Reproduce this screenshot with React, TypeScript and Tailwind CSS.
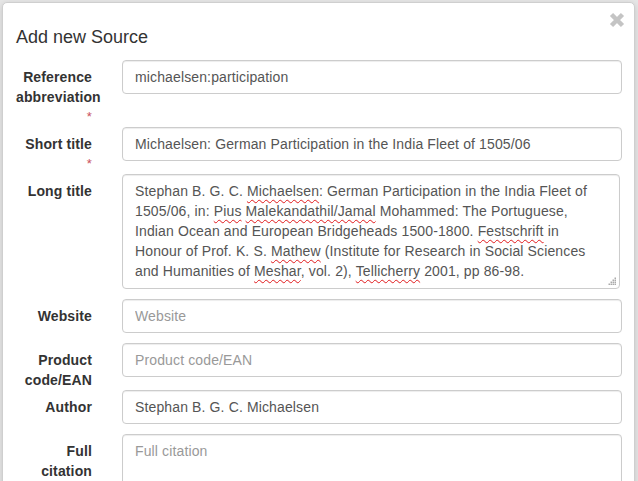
import React from "react";

const longLines: React.ReactNode[] = [
  <>Stephan B. G. C. <Sp>Michaelsen</Sp>: German Participation in the India Fleet of</>,
  <>1505/06, in: <Sp>Pius</Sp> <Sp>Malekandathil/Jamal</Sp> Mohammed: The Portuguese,</>,
  <>Indian Ocean and European Bridgeheads 1500-1800. <Sp>Festschrift</Sp> in</>,
  <>Honour of Prof. K. S. <Sp>Mathew</Sp> (Institute for Research in Social Sciences</>,
  <>and Humanities of <Sp>Meshar</Sp>, vol. 2), <Sp>Tellicherry</Sp> 2001, pp 86-98.</>,
];

function Sp({ children }: { children: React.ReactNode }) {
  return (
    <span className="underline decoration-wavy decoration-[#e0191c] decoration-1 underline-offset-[3px]">
      {children}
    </span>
  );
}

function Label({ text, required }: { text: string; required?: boolean }) {
  return (
    <div className="w-[76px] shrink-0 pt-[7px] text-right text-[14px] leading-[20px] font-bold tracking-[0.13px] text-[#333]">
      {text}
      {required && <div className="text-[13px] font-normal text-[#c9505c]">*</div>}
    </div>
  );
}

const inputCls =
  "block h-[34px] w-[500px] rounded-[4px] border border-[#ccc] bg-white px-[12px] py-[6px] text-[14px] leading-[20px] tracking-[0.13px] text-[#555] placeholder:text-[#999] shadow-[inset_0_1px_1px_rgba(0,0,0,0.075)] outline-none";

function Row({ label, required, children }: { label: string; required?: boolean; children: React.ReactNode }) {
  return (
    <div className="flex items-start pl-[13px]">
      <Label text={label} required={required} />
      <div className="ml-[30px] mb-[10px]">{children}</div>
    </div>
  );
}

function Grip() {
  return (
    <svg width="9" height="9" viewBox="0 0 9 9" className="absolute right-[2px] bottom-[2px]">
      {[
        [7, 1], [5, 3], [7, 3], [3, 5], [5, 5], [7, 5], [1, 7], [3, 7], [5, 7], [7, 7],
      ].map(([x, y], i) => (
        <rect key={i} x={x - 0.5} y={y - 0.5} width="1.5" height="1.5" fill="#aaa" />
      ))}
    </svg>
  );
}

export default function App() {
  return (
    <div
      className="h-[481px] w-[638px] overflow-hidden bg-[#e6e6e6] pl-[2px] pt-[2px]"
      style={{ fontFamily: "'Liberation Sans', Arial, sans-serif" }}
    >
      <div className="relative h-[600px] w-[633px] rounded-[5px] border border-[#cfcfcf] bg-white shadow-[0_2px_6px_rgba(0,0,0,0.15)]">
        {/* Header */}
        <div className="relative pt-[21px] pl-[13px]">
          <h4 className="h-[26px] text-[18px] leading-[26px] text-[#333]">Add new Source</h4>
          <button className="absolute right-[9px] top-[9px] h-[16px] w-[16px]">
            <svg width="16" height="16" viewBox="0 0 16 16">
              <path d="M2.5 2.5 L13.5 13.5 M13.5 2.5 L2.5 13.5" stroke="#c4c4c4" strokeWidth="4.5" strokeLinecap="butt" />
            </svg>
          </button>
        </div>

        {/* Body */}
        <div className="pt-[10px]">
          <Row label="Reference abbreviation" required>
            <input className={inputCls} defaultValue="michaelsen:participation" readOnly />
          </Row>
          <Row label="Short title" required>
            <input
              className={inputCls}
              defaultValue="Michaelsen: German Participation in the India Fleet of 1505/06"
              readOnly
            />
          </Row>
          <Row label="Long title">
            <div className="relative h-[115px] w-[498px] rounded-[4px] border border-[#ccc] bg-white px-[12px] py-[6px] text-[14px] leading-[20px] tracking-[0.13px] whitespace-nowrap text-[#555] shadow-[inset_0_1px_1px_rgba(0,0,0,0.075)]">
              {longLines.map((l, i) => (
                <div key={i}>{l}</div>
              ))}
              <Grip />
            </div>
          </Row>
          <Row label="Website">
            <input className={inputCls} placeholder="Website" />
          </Row>
          <Row label="Product code/EAN">
            <input className={inputCls} placeholder="Product code/EAN" />
          </Row>
          <Row label="Author">
            <input className={inputCls} defaultValue="Stephan B. G. C. Michaelsen" readOnly />
          </Row>
          <Row label="Full citation">
            <textarea className={inputCls + " h-[90px] resize-none"} placeholder="Full citation" />
          </Row>
        </div>
      </div>
    </div>
  );
}
